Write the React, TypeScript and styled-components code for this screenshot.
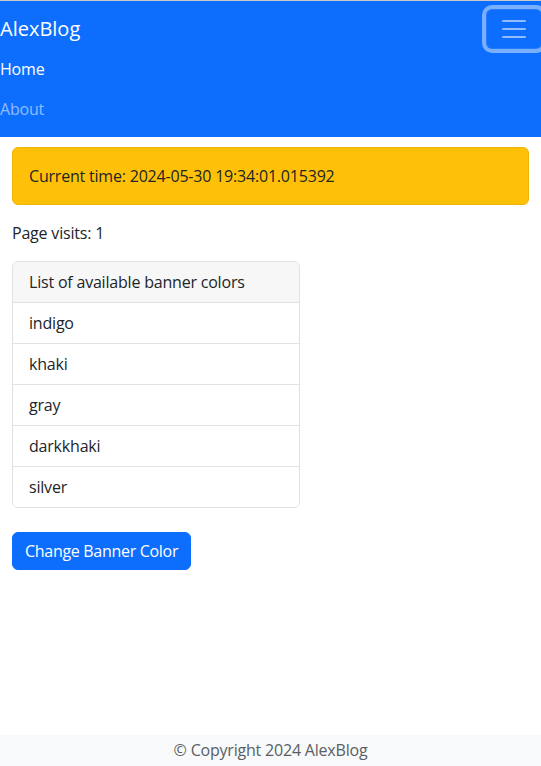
import styled, { createGlobalStyle } from "styled-components";

const GlobalStyle = createGlobalStyle`
  html, body {
    margin: 0;
    padding: 0;
  }
  body {
    font-family: "Open Sans", "Noto Sans", sans-serif;
    font-size: 16px;
    line-height: 24px;
    letter-spacing: -0.2px;
    color: #212529;
    background: #fff;
    overflow-x: hidden;
  }
  * {
    box-sizing: border-box;
  }
`;

const bannerColors = ["indigo", "khaki", "gray", "darkkhaki", "silver"];

const Page = styled.div`
  min-height: 100vh;
  display: flex;
  flex-direction: column;
  border-top: 1px solid #c9c9c9;
`;

const Navbar = styled.nav`
  background: #0d6efd;
  padding: 8px 0;
`;

const NavTop = styled.div`
  display: flex;
  align-items: center;
  justify-content: space-between;
  margin-right: -1px;
`;

const Brand = styled.a`
  color: #fff;
  font-size: 20px;
  line-height: 30px;
  letter-spacing: 0;
  padding: 5px 0;
  text-decoration: none;
`;

const Toggler = styled.button`
  width: 56px;
  height: 40px;
  padding: 4px 12px;
  background: transparent;
  border: 1px solid rgba(255, 255, 255, 0.1);
  border-radius: 6px;
  box-shadow: 0 0 0 4px rgba(255, 255, 255, 0.45);
  display: flex;
  align-items: center;
  justify-content: center;
  cursor: pointer;
`;

const NavList = styled.ul`
  list-style: none;
  margin: 0;
  padding: 0;
  display: flex;
  flex-direction: column;
`;

const NavLink = styled.a<{ $active?: boolean }>`
  display: block;
  padding: 8px 0;
  line-height: 24px;
  text-decoration: none;
  color: ${(p) => (p.$active ? "#fff" : "rgba(255, 255, 255, 0.55)")};
`;

const Main = styled.main`
  flex: 1;
  padding: 10px 12px 0;
`;

const Alert = styled.div`
  background: #ffc107;
  border: 1px solid #f0b404;
  border-radius: 6px;
  padding: 16px;
  margin-bottom: 16px;
  color: #212529;
`;

const Paragraph = styled.p`
  margin: 0 0 16px;
`;

const ListGroup = styled.ul`
  list-style: none;
  margin: 0;
  padding: 0;
  width: 288px;
  border: 1px solid #dee2e6;
  border-radius: 6px;
  overflow: hidden;
`;

const ListItem = styled.li<{ $header?: boolean }>`
  padding: 8px 16px;
  line-height: 24px;
  background: ${(p) => (p.$header ? "#f7f7f7" : "#fff")};
  & + & {
    border-top: 1px solid #dee2e6;
  }
`;

const Button = styled.button`
  margin-top: 24px;
  font-family: inherit;
  font-size: 16px;
  line-height: 24px;
  letter-spacing: -0.3px;
  padding: 6px 12px;
  color: #fff;
  background: #0d6efd;
  border: 1px solid #0d6efd;
  border-radius: 6px;
  cursor: pointer;
`;

const Footer = styled.footer`
  background: #f8f9fa;
  color: #5a5f64;
  text-align: center;
  height: 31px;
  line-height: 31px;
  margin-top: auto;
`;

const TogglerIcon = () => (
  <svg width="30" height="30" viewBox="0 0 30 30">
    <path
      stroke="rgba(255, 255, 255, 0.55)"
      strokeLinecap="round"
      strokeMiterlimit="10"
      strokeWidth="2"
      d="M4 7h22M4 15h22M4 23h22"
    />
  </svg>
);

export default function App() {
  return (
    <>
      <GlobalStyle />
      <Page>
        <Navbar>
          <NavTop>
            <Brand href="#">AlexBlog</Brand>
            <Toggler aria-label="Toggle navigation">
              <TogglerIcon />
            </Toggler>
          </NavTop>
          <NavList>
            <li>
              <NavLink href="#" $active>
                Home
              </NavLink>
            </li>
            <li>
              <NavLink href="#">About</NavLink>
            </li>
          </NavList>
        </Navbar>
        <Main>
          <Alert>Current time: 2024-05-30 19:34:01.015392</Alert>
          <Paragraph>Page visits: 1</Paragraph>
          <ListGroup>
            <ListItem $header>List of available banner colors</ListItem>
            {bannerColors.map((c) => (
              <ListItem key={c}>{c}</ListItem>
            ))}
          </ListGroup>
          <Button>Change Banner Color</Button>
        </Main>
        <Footer>© Copyright 2024 AlexBlog</Footer>
      </Page>
    </>
  );
}
